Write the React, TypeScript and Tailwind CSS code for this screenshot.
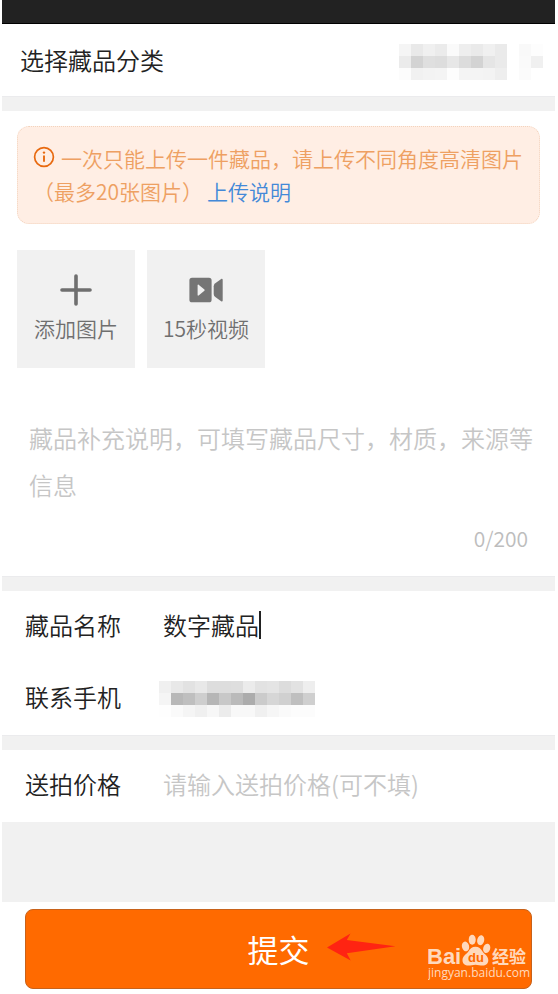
import { Plus } from 'lucide-react';
import { useState } from 'react';

// Grey levels of the masked values, one row of 12px cells per array.
const CATEGORY_MASK = [
  [245, 233, 240, 235, 250, 238, 234, 240, 234, 255, 249, 253],
  [235, 211, 223, 221, 231, 220, 211, 229, 234, 255, 250, 240],
  [252, 241, 243, 244, 253, 244, 244, 243, 238, 255, 251, 255],
];

const PHONE_MASK = [
  [240, 232, 226, 232, 221, 221, 222, 235, 226, 228, 220, 226, 238],
  [245, 184, 191, 206, 182, 200, 186, 172, 203, 214, 208, 191, 207],
  [254, 250, 245, 240, 247, 236, 248, 248, 240, 246, 250, 252, 252],
];

function Mosaic({ cells }: { cells: number[][] }) {
  const cols = cells[0]?.length ?? 0;
  return (
    <svg
      width={cols * 12}
      height={cells.length * 12}
      shapeRendering="crispEdges"
      className="shrink-0"
      aria-hidden="true"
    >
      {cells.map((row, y) =>
        row.map((v, x) => (
          <rect
            key={`${x}-${y}`}
            x={x * 12}
            y={y * 12}
            width={12}
            height={12}
            fill={`rgb(${v},${v},${v})`}
          />
        )),
      )}
    </svg>
  );
}

function InfoIcon() {
  return (
    <svg viewBox="0 0 22 22" className="inline-block size-[22px] -mt-2 mr-1.5" aria-hidden="true">
      <circle cx="11" cy="11" r="9.4" fill="none" stroke="#e8690f" strokeWidth="1.7" />
      <circle cx="11" cy="6.6" r="1.2" fill="#e8690f" />
      <path d="M11 9.4v6.4" stroke="#e8690f" strokeWidth="1.9" />
    </svg>
  );
}

function VideoIcon() {
  return (
    <svg viewBox="0 0 34 26" className="h-[26px] w-[34px]" aria-hidden="true">
      <path
        fill="#757575"
        fillRule="evenodd"
        d="M3 .7h17a2.6 2.6 0 0 1 2.6 2.6v19.4a2.6 2.6 0 0 1-2.6 2.6H3A2.6 2.6 0 0 1 .4 22.7V3.3A2.6 2.6 0 0 1 3 .7ZM8.6 8.2v9.8c0 .6.6.8 1 .5l5.8-4.7c.4-.3.4-.9 0-1.2L9.6 7.700c-.4-.3-1-.1-1 .5Z"
      />
      <path
        fill="#757575"
        d="M32.2 1.9 26.3 6.3Q24.7 7.5 24.7 9.3v7.6q0 1.8 1.6 3l5.9 4.3c.8.5 1.5.1 1.5-.8V2.700c0-.9-.7-1.3-1.5-.8Z"
      />
    </svg>
  );
}

function Watermark() {
  return (
    <svg viewBox="0 0 104 48" className="h-12 w-[104px]" fill="#ffd9bd" aria-hidden="true">
      <text x="-1" y="31" fontSize="22" fontWeight="700" fontFamily="'Liberation Sans', Arial, sans-serif">
        Bai
      </text>
      <ellipse cx="37.5" cy="13.4" rx="3.6" ry="4.9" transform="rotate(-14 37.5 13.4)" />
      <ellipse cx="44.2" cy="6.8" rx="3.5" ry="5" />
      <ellipse cx="52.7" cy="7.2" rx="3.5" ry="5" transform="rotate(12 52.7 7.2)" />
      <ellipse cx="58.7" cy="15.4" rx="3.5" ry="4.8" transform="rotate(16 58.7 15.4)" />
      <path d="M47.500 13.800c3.400 0 5.200 2 7 4.700 1.800 2.600 5.800 4.600 5.800 8.700 0 3.600-2.600 5.300-5.600 5.300-2.600 0-4.700-.8-7.200-.8s-4.600.8-7.200.8c-3.200 0-5.800-1.700-5.800-5.300 0-4.100 4-6.100 5.900-8.700 1.800-2.700 3.600-4.700 7.100-4.700Z" />
      <text
        x="40"
        y="29"
        fontSize="13"
        fontWeight="700"
        fill="#ff6a00"
        fontFamily="'Liberation Sans', Arial, sans-serif"
      >
        du
      </text>
      <text x="64" y="30" fontSize="17" fontWeight="700" fontFamily="'Noto Sans CJK SC', sans-serif">
        经验
      </text>
      <text x="0" y="44" fontSize="12" fontWeight="400" fontFamily="'Open Sans', 'Noto Sans', sans-serif">
        jingyan.baidu.com
      </text>
    </svg>
  );
}

function Divider() {
  return <div className="h-[15px] border-t border-[#ebebed] bg-[#f1f1f1]" />;
}

const rowClass = 'flex items-center px-[23px] py-[18px]';
const labelClass = 'w-[134px] shrink-0 pb-1 leading-8';

export default function App() {
  const [description, setDescription] = useState('');
  const [name, setName] = useState('数字藏品');
  const [price, setPrice] = useState('');

  return (
    <form
      onSubmit={(e) => e.preventDefault()}
      className="flex min-h-screen flex-col bg-white pl-0.5 pr-[3px] font-['Noto_Sans_CJK_SC',sans-serif] text-[24px] font-[350] text-[#222]"
    >
      <div className="h-6 border-b border-black bg-[#222]" />

      <button type="button" className="flex items-center justify-between pt-5 pb-4 pl-[18px] pr-3">
        <span className="pb-1 leading-8">选择藏品分类</span>
        <Mosaic cells={CATEGORY_MASK} />
      </button>

      <Divider />

      <section className="px-[15px] pt-[15px] pb-5">
        <div className="rounded-xl border border-dotted border-[#f3d3bd] bg-[#ffeee4] py-[15px] pl-[15px] pr-3 text-[21px] leading-[33px] text-[#eea062]">
          <p>
            <InfoIcon />
            一次只能上传一件藏品，请上传不同角度高清图片
          </p>
          <p>
            <span>（最多20张图片）</span>
            <a href="#upload-help" className="ml-1 text-[#4389d8]">
              上传说明
            </a>
          </p>
        </div>

        <div className="mt-[26px] flex gap-3 text-[21px] leading-7 text-[#6f6f6f]">
          <button
            type="button"
            className="flex size-[118px] flex-col items-center bg-[#f1f1f1] pt-4"
          >
            <Plus className="size-12" strokeWidth={1.8} />
            添加图片
          </button>
          <button
            type="button"
            className="flex size-[118px] flex-col items-center bg-[#f1f1f1] pt-4"
          >
            <span className="flex h-12 items-center">
              <VideoIcon />
            </span>
            15秒视频
          </button>
        </div>

        <textarea
          value={description}
          onChange={(e) => setDescription(e.target.value)}
          maxLength={200}
          rows={2}
          aria-label="藏品补充说明"
          placeholder="藏品补充说明，可填写藏品尺寸，材质，来源等信息"
          className="mt-[46px] block w-full resize-none overflow-hidden pl-3 leading-[47px] outline-none placeholder:text-[#c6c6c6] placeholder:opacity-100"
        />
        <div className="mt-3 pr-3 text-right text-[21px] leading-9 text-[#bdbdbd]">
          {description.length}/200
        </div>
      </section>

      <Divider />

      <div className={rowClass}>
        <label htmlFor="name" className={labelClass}>
          藏品名称
        </label>
        <input
          id="name"
          value={name}
          onChange={(e) => setName(e.target.value)}
          className="field-sizing-content h-9 pb-1 pl-1 caret-transparent outline-none"
        />
        <span className="mb-1 h-7 w-0.5 bg-[#222]" />
      </div>
      <div className={rowClass}>
        <span className={labelClass}>联系手机</span>
        <Mosaic cells={PHONE_MASK} />
      </div>

      <Divider />

      <div className={rowClass}>
        <label htmlFor="price" className={labelClass}>
          送拍价格
        </label>
        <input
          id="price"
          value={price}
          onChange={(e) => setPrice(e.target.value)}
          placeholder="请输入送拍价格(可不填)"
          className="h-9 min-w-0 flex-1 pb-1 pl-1 outline-none placeholder:text-[#c6c6c6] placeholder:opacity-100"
        />
      </div>

      <div className="min-h-10 flex-1 bg-[#f1f1f1]" />

      <footer className="px-[23px] pt-[7px] pb-[5px]">
        <div className="relative">
          <button
            type="submit"
            className="h-20 w-full rounded-lg border border-[#c8621a] bg-[#ff6a00] text-[31px] font-normal text-white"
          >
            提交
          </button>
          <svg
            viewBox="0 0 70 28"
            className="pointer-events-none absolute top-6 left-1/2 ml-12 h-7 w-[70px]"
            aria-hidden="true"
          >
            <path d="M0 14.500 23.500.6 19.800 7 68.500 13.300 19.800 20.300 23.700 27.400Z" fill="#ff2412" />
          </svg>
          <div className="pointer-events-none absolute top-6 right-0">
            <Watermark />
          </div>
        </div>
      </footer>
    </form>
  );
}
